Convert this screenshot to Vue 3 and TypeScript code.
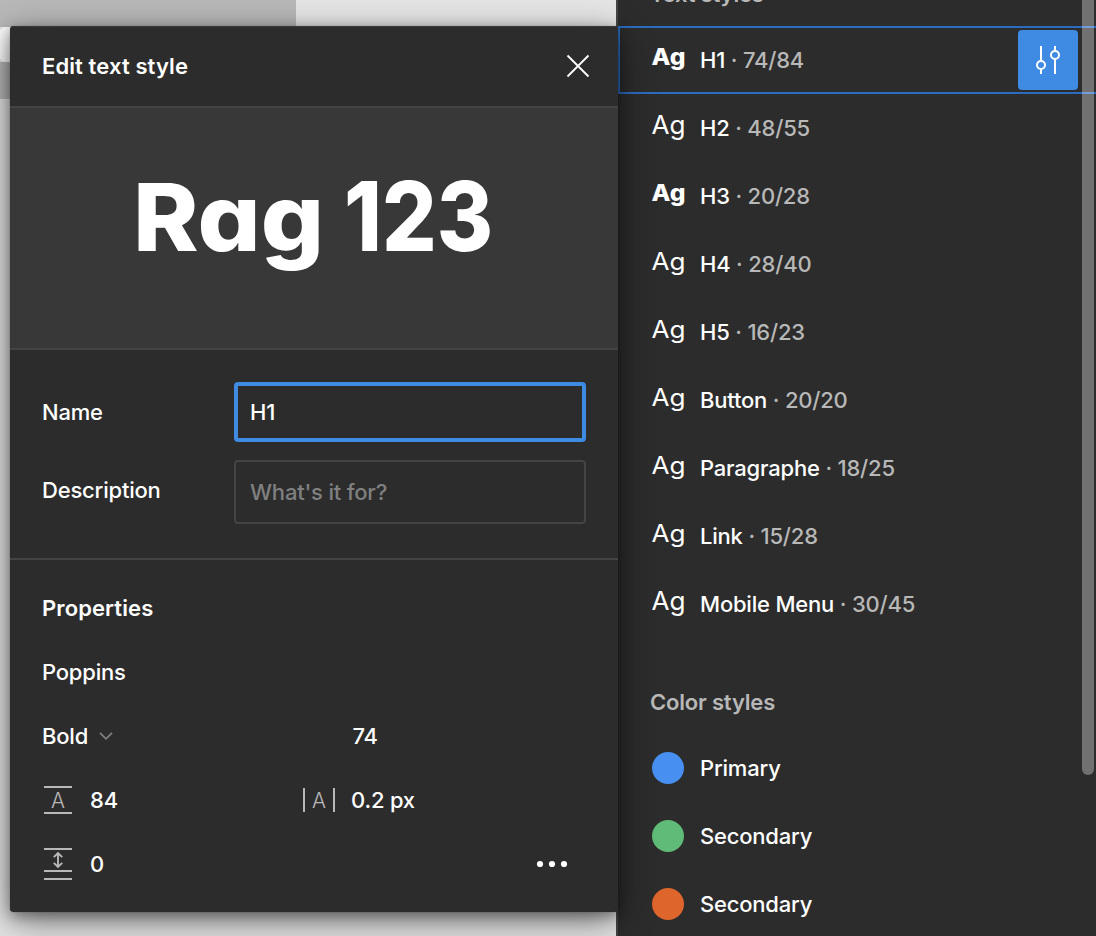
<script setup lang="ts">
interface TextStyle {
  name: string
  metrics: string
  weight: number
  size: number
  baseline: number
  selected?: boolean
}

const textStyles: TextStyle[] = [
  { name: 'H1', metrics: '74/84', weight: 800, size: 23, baseline: 39, selected: true },
  { name: 'H2', metrics: '48/55', weight: 400, size: 25.5, baseline: 39.5 },
  { name: 'H3', metrics: '20/28', weight: 800, size: 23, baseline: 39 },
  { name: 'H4', metrics: '28/40', weight: 400, size: 24, baseline: 39.5 },
  { name: 'H5', metrics: '16/23', weight: 400, size: 24, baseline: 39.5 },
  { name: 'Button', metrics: '20/20', weight: 400, size: 24, baseline: 39.5 },
  { name: 'Paragraphe', metrics: '18/25', weight: 400, size: 24, baseline: 39.5 },
  { name: 'Link', metrics: '15/28', weight: 400, size: 24, baseline: 39.5 },
  { name: 'Mobile Menu', metrics: '30/45', weight: 400, size: 25.5, baseline: 40 },
]

const colorStyles = [
  { name: 'Primary', color: '#478ff0' },
  { name: 'Secondary', color: '#5fbb77' },
  { name: 'Secondary', color: '#de652b' },
]
</script>

<template>
  <div class="app">
    <div class="canvas">
      <div class="frame-top"></div>
      <div class="frame-card"></div>
      <div class="frame-bar"></div>
    </div>

    <aside class="sidebar">
      <h2 class="heading">Text styles</h2>
      <div v-for="s in textStyles" :key="s.name" class="row" :class="{ selected: s.selected }">
        <svg class="sample" width="36" height="68" viewBox="0 0 36 68">
          <text x="0.5" :y="s.baseline" textLength="34" lengthAdjust="spacingAndGlyphs" :font-size="s.size" :font-weight="s.weight">Ag</text>
        </svg>
        <span class="label">{{ s.name }}<span class="metrics"> · {{ s.metrics }}</span></span>
        <button v-if="s.selected" class="tune" aria-label="Edit style">
          <svg width="60" height="60" viewBox="0 0 60 60" fill="none" stroke="#fff" stroke-width="2">
            <path d="M23 16v15M23 39v5M37 16v5M37 29v15" />
            <circle cx="23" cy="35" r="4" />
            <circle cx="37" cy="25" r="4" />
          </svg>
        </button>
      </div>
      <h2 class="heading colors">Color styles</h2>
      <div v-for="(c, i) in colorStyles" :key="i" class="row">
        <span class="swatch" :style="{ background: c.color }"></span>
        <span class="label">{{ c.name }}</span>
      </div>
    </aside>
    <div class="scrollbar"></div>

    <section class="dialog">
      <header class="dialog-head">
        <h1 class="title">Edit text style</h1>
        <svg width="24" height="24" viewBox="0 0 24 24" fill="none" stroke="#fff" stroke-width="1.8">
          <path d="M1.5 1.5l21 21M22.5 1.5l-21 21" />
        </svg>
      </header>

      <div class="preview">
        <svg width="608" height="240" viewBox="0 0 608 240">
          <text x="123" y="142.5" textLength="191" lengthAdjust="spacingAndGlyphs" font-size="93">Rag</text>
          <text x="334" y="142.5" textLength="149" lengthAdjust="spacingAndGlyphs" font-size="96">123</text>
        </svg>
      </div>

      <div class="form">
        <div class="field name-field">
          <span class="field-label">Name</span>
          <div class="input focused">H1</div>
        </div>
        <div class="field desc-field">
          <span class="field-label">Description</span>
          <div class="input placeholder">What's it for?</div>
        </div>
      </div>

      <div class="properties">
        <div class="prop"><h2 class="title">Properties</h2></div>
        <div class="prop">Poppins</div>
        <div class="prop">
          <div class="cell">
            <span>Bold</span>
            <svg class="chevron" width="14" height="10" viewBox="0 0 14 10" fill="none" stroke="#808080" stroke-width="1.7">
              <path d="M1 1.8l6 6 6-6" />
            </svg>
          </div>
          <span class="font-size">74</span>
        </div>
        <div class="prop">
          <div class="cell">
            <svg class="icon" width="32" height="32" viewBox="0 0 32 32">
              <path d="M2 3h28M2 29h28" stroke="#b8b8b8" stroke-width="2" />
              <text x="9" y="24" textLength="14" lengthAdjust="spacingAndGlyphs" class="icon-letter">A</text>
            </svg>
            <span>84</span>
          </div>
          <svg class="icon" width="32" height="32" viewBox="0 0 32 32">
            <path d="M1 4v24M31 4v24" stroke="#b8b8b8" stroke-width="2" />
            <text x="9" y="24" textLength="14" lengthAdjust="spacingAndGlyphs" class="icon-letter">A</text>
          </svg>
          <span>0.2 px</span>
        </div>
        <div class="prop">
          <div class="cell">
            <svg class="icon" width="32" height="32" viewBox="0 0 32 32" fill="none" stroke="#b8b8b8" stroke-width="2">
              <path d="M2 1h28M2 23h28M2 31h28" />
              <path d="M16 5v14M11.8 9.2l4.2-4.2 4.2 4.2M11.8 14.8l4.2 4.2 4.2-4.2" stroke-width="1.9" />
            </svg>
            <span>0</span>
          </div>
          <svg class="more" width="32" height="8" viewBox="0 0 32 8" fill="#fff">
            <circle cx="4" cy="4" r="3.1" />
            <circle cx="16" cy="4" r="3.1" />
            <circle cx="28" cy="4" r="3.1" />
          </svg>
        </div>
      </div>
    </section>
  </div>
</template>

<style>
body {
  margin: 0;
  overflow: hidden;
}
</style>

<style scoped>
.app {
  position: relative;
  display: flex;
  width: 1096px;
  height: 936px;
  overflow: hidden;
  background: #e5e5e5;
  color: #fff;
  font-family: Inter, "Liberation Sans", sans-serif;
  font-size: 22px;
  font-weight: 450;
  line-height: 32px;
  letter-spacing: -0.2px;
  white-space: pre;
}

.canvas {
  width: 616px;
  flex: none;
}

.frame-top {
  width: 296px;
  height: 27px;
  background: #b8b8b8;
}

.frame-card {
  width: 200px;
  height: 35px;
  background: #fff;
  border-radius: 5px;
}

.frame-bar {
  width: 200px;
  height: 37px;
  background: #b8b8b8;
}

.sidebar {
  flex: 1;
  box-sizing: border-box;
  margin-top: -38px;
  height: 974px;
  border-left: 2px solid #444;
  background: #2c2c2c;
}

.heading {
  margin: 0;
  padding-left: 32px;
  font-size: 22px;
  font-weight: 600;
  line-height: 64px;
  letter-spacing: -0.18px;
  color: #b8b8b8;
}

.colors {
  margin-top: 32px;
}

.row {
  display: flex;
  align-items: center;
  box-sizing: border-box;
  height: 68px;
  padding-left: 34px;
  padding-right: 18px;
}

.selected {
  padding-left: 32px;
  border: 2px solid #2c6cc0;
  border-right: 0;
}

.sample {
  flex: none;
  width: 36px;
  margin: -2px 13px -2px -1px;
  fill: #fff;
  letter-spacing: 0;
  font-feature-settings: "cv11";
}

.swatch {
  width: 32px;
  height: 32px;
  margin-right: 16px;
  border-radius: 50%;
}

.metrics {
  color: #b8b8b8;
}

.tune {
  width: 60px;
  height: 60px;
  margin-left: auto;
  padding: 0;
  border: 0;
  border-radius: 4px;
  background: #3f8ae2;
}

.scrollbar {
  position: absolute;
  top: -20px;
  left: 1082px;
  width: 12px;
  height: 795px;
  border-radius: 6px;
  background: rgba(255, 255, 255, 0.33);
}

.dialog {
  position: absolute;
  top: 26px;
  left: 10px;
  width: 608px;
  height: 886px;
  border-radius: 4px;
  background: #2c2c2c;
  box-shadow:
    0 10px 36px rgba(0, 0, 0, 0.46),
    0 4px 14px rgba(0, 0, 0, 0.36),
    0 0 1px rgba(0, 0, 0, 0.5),
    inset 0 1px 0 #3a3a3a;
}

.dialog-head {
  display: flex;
  align-items: center;
  justify-content: space-between;
  height: 80px;
  padding: 0 28px 0 32px;
  border-bottom: 2px solid #444;
}

.title {
  margin: 0;
  font-size: 22px;
  font-weight: 600;
  letter-spacing: 0.1px;
}

.preview {
  height: 240px;
  background: #383838;
  border-bottom: 2px solid #444;
}

.preview svg {
  display: block;
  fill: #fff;
  font-weight: 800;
  letter-spacing: 0;
  font-feature-settings: "cv11";
}

.form {
  box-sizing: border-box;
  height: 210px;
  padding: 32px 32px 0;
  border-bottom: 2px solid #444;
}

.field {
  display: flex;
}

.field-label {
  width: 192px;
}

.name-field {
  align-items: center;
  margin-bottom: 18px;
}

.desc-field .field-label {
  padding-top: 14px;
}

.input {
  display: flex;
  align-items: center;
  box-sizing: border-box;
  width: 352px;
  height: 64px;
  padding-left: 14px;
  border: 2px solid #444;
  border-radius: 4px;
}

.focused {
  height: 60px;
  padding-left: 12px;
  border: 4px solid #3f8ae2;
}

.placeholder {
  color: #808080;
}

.properties {
  padding: 16px 32px;
}

.prop {
  display: flex;
  align-items: center;
  height: 64px;
}

.cell {
  display: flex;
  align-items: center;
  width: 261px;
}

.chevron {
  margin-left: 11px;
}

.font-size {
  margin-left: 49.5px;
}

.icon {
  flex: none;
  margin-right: 16px;
}

.icon-letter {
  fill: #b8b8b8;
  font-size: 22px;
  font-weight: 300;
  letter-spacing: 0;
}

.more {
  margin-left: 233px;
}
</style>
